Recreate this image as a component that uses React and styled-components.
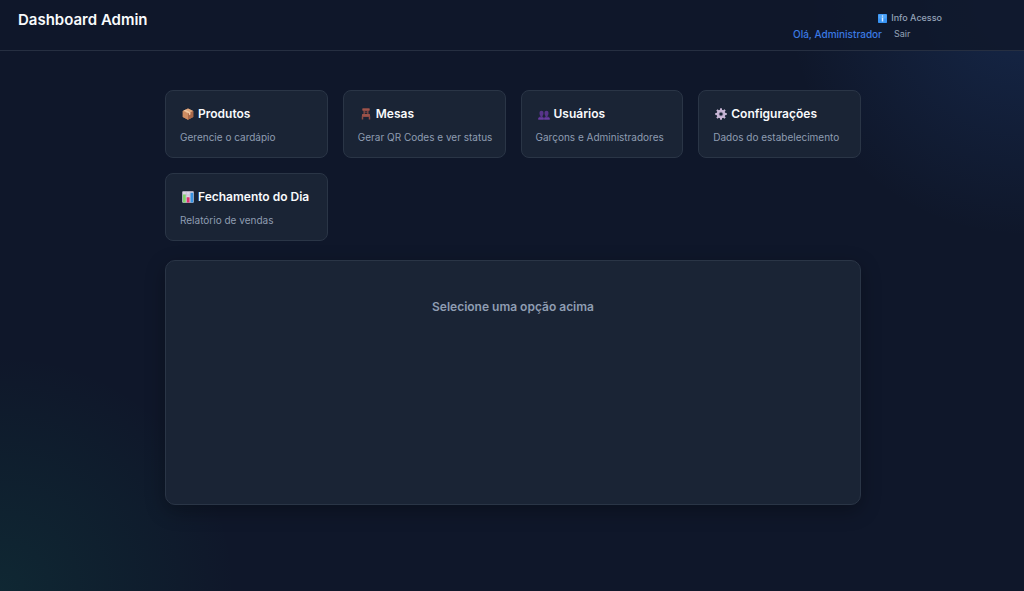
import React from "react";
import styled, { createGlobalStyle } from "styled-components";

const GlobalStyle = createGlobalStyle`
  *, *::before, *::after { box-sizing: border-box; }
  body {
    margin: 0;
    min-height: 100vh;
    color: #f8fafc;
    font-family: Inter, "Liberation Sans", sans-serif;
    background:
      radial-gradient(circle at 100% 0%, rgba(59, 130, 246, 0.15), transparent 20%) no-repeat,
      radial-gradient(circle at 0% 100%, rgba(16, 185, 129, 0.1), transparent 20%) no-repeat,
      #0f172a;
  }
`;

const Header = styled.header`
  display: flex;
  justify-content: space-between;
  align-items: flex-start;
  padding: 10px 82px 8px 18px;
  background: rgba(15, 23, 42, 0.85);
  border-bottom: 1px solid #262f41;
`;

const PageTitle = styled.h1`
  margin: 0;
  font-size: 15px;
  line-height: 20px;
  font-weight: 600;
`;

const Account = styled.div`
  display: flex;
  flex-direction: column;
  min-width: 149px;
`;

const AccountRow = styled.div`
  display: flex;
  justify-content: ${(p) => (p.$end ? "flex-end" : "flex-start")};
  gap: 12px;
  height: 16px;
  line-height: 16px;
`;

const Greeting = styled.span`
  color: #3b7ae4;
  font-size: 10px;
  font-weight: 500;
`;

const InfoButton = styled.button`
  display: flex;
  align-items: center;
  gap: 4px;
  padding: 0;
  border: 0;
  background: none;
  color: #94a3b8;
  font: 500 9px/16px Inter, "Liberation Sans", sans-serif;
  cursor: pointer;
`;

const LogoutLink = styled.a`
  color: #94a3b8;
  font-size: 9px;
  text-decoration: none;
`;

const Main = styled.main`
  max-width: 698px;
  margin: 39px auto 0;
  padding-left: 2px;
`;

const CardGrid = styled.nav`
  display: grid;
  grid-template-columns: repeat(auto-fill, minmax(150px, 1fr));
  gap: 15px;
`;

const Card = styled.a`
  display: block;
  padding: 14px 14px 12px;
  border: 1px solid #2a3546;
  border-radius: 8px;
  background: #1a2435;
  color: inherit;
  text-decoration: none;
`;

const CardTitle = styled.h2`
  display: flex;
  align-items: center;
  gap: 4px;
  margin: 0 0 7px;
  padding-left: 2px;
  font-size: 12px;
  line-height: 17px;
  font-weight: 600;
  white-space: nowrap;
`;

const CardText = styled.p`
  margin: 0;
  color: #8f9db2;
  font-size: 10px;
  line-height: 16px;
  white-space: nowrap;
`;

const Panel = styled.section`
  min-height: 245px;
  margin-top: 19px;
  padding: 38px 16px;
  border: 1px solid #2a3546;
  border-radius: 10px;
  background: #1a2435;
  box-shadow: 0 6px 20px rgba(0, 0, 0, 0.3);
  text-align: center;
`;

const EmptyTitle = styled.h2`
  margin: 0;
  color: #8f9db2;
  font-size: 12px;
  line-height: 16px;
  font-weight: 600;
`;

const Glyph = styled.svg`
  flex: none;
  width: ${(p) => p.$size || 12}px;
  height: ${(p) => p.$size || 12}px;
`;

const InfoIcon = () => (
  <Glyph viewBox="0 0 18 18" $size={9} aria-hidden="true">
    <rect width="18" height="18" rx="1.5" fill="#3793f4" />
    <rect x="1" y="1" width="16" height="8" rx="1" fill="#50a4f6" />
    <circle cx="9" cy="4.2" r="1.5" fill="#e6f2ff" />
    <path d="M7.500 7h3v8h-3z" fill="#d6eaff" />
  </Glyph>
);

const BoxIcon = () => (
  <Glyph viewBox="0 0 24 24" aria-hidden="true">
    <path d="M1.500 6 12 1l10.500 5v12L12 23.500 1.500 18z" fill="#b87952" />
    <path d="M1.500 6 12 1l10.500 5L12 11.500z" fill="#e2aa7f" />
    <path d="M1.500 6 12 11.500v12L1.500 18z" fill="#ce8d62" />
    <path d="M12 11.500 22.500 6v12L12 23.500z" fill="#a9694a" />
    <path d="m6.500 3.600 10.400 5.300v4l-3 1.500v-4L3.800 5z" fill="#f0c9a3" />
  </Glyph>
);

const ChairIcon = () => (
  <Glyph viewBox="0 0 24 24" aria-hidden="true">
    <path d="M5 1h14v5h-2v6h2l1.500 5v6h-3v-5h-11v5h-3v-6L5 12h2V6H5z" fill="#8d4a45" />
    <path d="M9.500 6.500h5V9h-5zM9.500 10.200h5V12h-5z" fill="#1f2735" />
    <path d="M5 1h14v3H5zM4.500 12.500h15l.8 3H3.700z" fill="#a0554b" />
  </Glyph>
);

const UsersIcon = () => (
  <Glyph viewBox="0 0 24 24" aria-hidden="true">
    <g fill="#57348a">
      <path d="M3 10c0-3 1.500-4.500 4-4.500S11 7 11 10s-1.200 5.500-2.500 6v1c2 .5 3.200 1.500 3.200 6H.5c0-4.500 1.300-5.500 5-6v-1C4 15.500 3 13 3 10z" />
      <path d="M13 10c0-3 1.500-4.500 4-4.500S21 7 21 10s-1 5.500-2.500 6v1c3.700.5 5 1.500 5 6H12.300c0-4.500 1.200-5.500 3.200-6v-1C14.200 15.500 13 13 13 10z" />
    </g>
    <path d="M.8 20.500h10.700V23H.5zM12.500 20.500h10.700l.3 2.500H12.300z" fill="#6d3fa6" />
  </Glyph>
);

const teeth = [0, 45, 90, 135, 180, 225, 270, 315];

const GearIcon = () => (
  <Glyph viewBox="0 0 24 24" aria-hidden="true">
    {teeth.map((angle) => (
      <path key={angle} d="M9.700 5 10.200.5h3.600l.5 4.500z" fill="#c9b7d6" transform={`rotate(${angle} 12 12)`} />
    ))}
    <circle cx="12" cy="12" r="6.200" fill="none" stroke="#c9b7d6" strokeWidth="5" />
    <circle cx="12" cy="12" r="4.400" fill="none" stroke="#a593b5" strokeWidth="1" />
  </Glyph>
);

const ChartIcon = () => (
  <Glyph viewBox="0 0 24 24" aria-hidden="true">
    <rect x=".5" y=".5" width="23" height="23" rx="1.500" fill="#dcd5e5" />
    <path d="M1 8h22M1 15.500h22M8.500 1v22M16 1v22" stroke="#b9afc6" strokeWidth="1" />
    <rect x="2" y="7" width="5.500" height="16" fill="#7fd36a" />
    <rect x="9.500" y="12.500" width="5.500" height="10.500" fill="#e0336f" />
    <rect x="17" y="3.500" width="5.500" height="19.500" fill="#3795e4" />
  </Glyph>
);

const sections = [
  { id: "produtos", title: "Produtos", text: "Gerencie o cardápio", Icon: BoxIcon },
  { id: "mesas", title: "Mesas", text: "Gerar QR Codes e ver status", Icon: ChairIcon },
  { id: "usuarios", title: "Usuários", text: "Garçons e Administradores", Icon: UsersIcon },
  { id: "configuracoes", title: "Configurações", text: "Dados do estabelecimento", Icon: GearIcon },
  { id: "fechamento", title: "Fechamento do Dia", text: "Relatório de vendas", Icon: ChartIcon },
];

export default function App() {
  return (
    <>
      <GlobalStyle />
      <Header>
        <PageTitle>Dashboard Admin</PageTitle>
        <Account>
          <AccountRow $end>
            <InfoButton type="button">
              <InfoIcon />
              Info Acesso
            </InfoButton>
          </AccountRow>
          <AccountRow>
            <Greeting>Olá, Administrador</Greeting>
            <LogoutLink href="#sair">Sair</LogoutLink>
          </AccountRow>
        </Account>
      </Header>
      <Main>
        <CardGrid>
          {sections.map(({ id, title, text, Icon }) => (
            <Card key={id} href={`#${id}`}>
              <CardTitle>
                <Icon />
                {title}
              </CardTitle>
              <CardText>{text}</CardText>
            </Card>
          ))}
        </CardGrid>
        <Panel>
          <EmptyTitle>Selecione uma opção acima</EmptyTitle>
        </Panel>
      </Main>
    </>
  );
}
